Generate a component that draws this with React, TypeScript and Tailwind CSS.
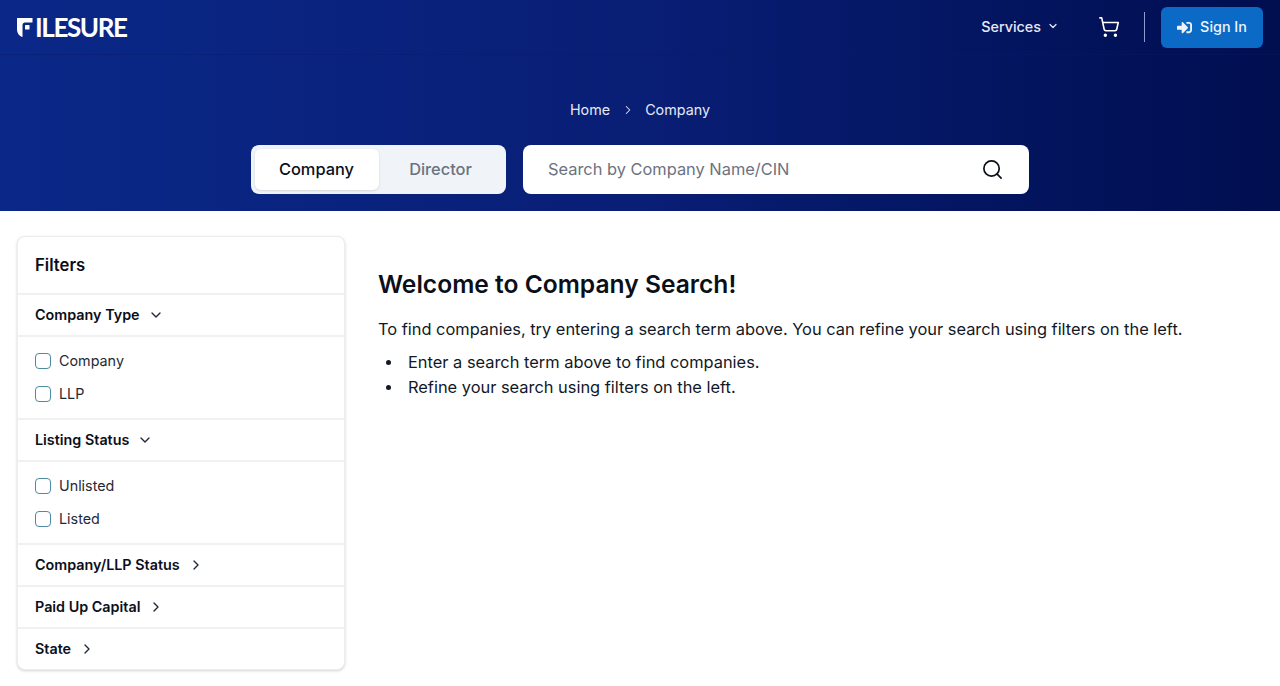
import { ChevronDown, ChevronRight, Search, ShoppingCart } from 'lucide-react'
import { FaSignInAlt } from 'react-icons/fa'

function FilterHeader({ label, open }: { label: string; open?: boolean }) {
  return (
    <div className="flex h-[42px] items-center gap-2 border-t-2 border-[#f0f1f3] pr-4 pl-[17px] text-[14.35px] leading-[22px] font-semibold text-[#0b0f19]">
      <span>{label}</span>
      {open ? (
        <ChevronDown className="h-4 w-4 text-[#1f2937]" strokeWidth={2} />
      ) : (
        <ChevronRight className="h-4 w-4 text-[#1f2937]" strokeWidth={2} />
      )}
    </div>
  )
}

function FilterOption({ label }: { label: string }) {
  return (
    <label className="flex h-[33px] items-center gap-2 text-[14.35px] text-[#1f2937]">
      <span className="h-4 w-4 rounded-[4px] border border-[#4f8aa3] bg-white" />
      <span>{label}</span>
    </label>
  )
}

function FilterGroup({ label, options }: { label: string; options: string[] }) {
  return (
    <>
      <FilterHeader label={label} open />
      <div className="border-t-2 border-[#f0f1f3] pt-[7px] pr-4 pb-2 pl-[17px]">
        {options.map((o) => (
          <FilterOption key={o} label={o} />
        ))}
      </div>
    </>
  )
}

function Bullet({ children }: { children: string }) {
  return (
    <li className="flex items-center">
      <span className="mr-[17px] ml-2 h-[5px] w-[5px] rounded-full bg-[#111827]" />
      {children}
    </li>
  )
}

export default function App() {
  return (
    <div className="h-screen overflow-hidden bg-white font-['Inter',sans-serif] text-[#0b0f19]">
      <div className="h-[211px] bg-gradient-to-r from-[#0a2888] via-[#091e75] to-[#010e50]">
        <header className="flex h-[55px] items-center justify-between border-b border-[#0a1a6a]/40 px-[17px]">
          <div className="flex items-center text-white">
            <svg width="16" height="19" viewBox="0 0 16 19" fill="white" className="mt-[1px]">
              <path d="M0 0H15.5V4.5H8C6.5 4.5 5.5 5.5 5.5 7V19C2 18 0 15 0 11Z" />
              <rect x="8" y="7" width="4.5" height="4.5" rx="0.5" />
            </svg>
            <span className="ml-[2px] font-['Lato',sans-serif] text-[26px] leading-[38px] font-bold tracking-[-1.4px]">ILESURE</span>
          </div>
          <div className="flex items-center">
            <div className="-mt-px flex items-center gap-[6px] text-[14.35px] font-medium text-[#e5e9f5]">
              Services
              <ChevronDown className="h-3 w-3" strokeWidth={2.5} />
            </div>
            <ShoppingCart className="ml-[39px] h-[22px] w-[22px] text-white" strokeWidth={1.75} />
            <div className="mr-4 ml-[24px] h-[30px] w-px bg-[#8d9ccf]" />
            <button className="flex h-[41px] w-[102px] items-center justify-center gap-2 rounded-md bg-[#0a6ac6] text-[14.35px] font-medium text-[#eef3fb]">
              <FaSignInAlt className="h-[15px] w-[15px]" />
              Sign In
            </button>
          </div>
        </header>
        <nav className="mt-[45px] flex items-center justify-center gap-[10px] text-[14.35px] leading-5 text-[#e5e9f5]">
          <span>Home</span>
          <ChevronRight className="ml-[1px] h-[14px] w-[14px]" strokeWidth={1.75} />
          <span>Company</span>
        </nav>
        <div className="mt-[25px] flex justify-center gap-[17px]">
          <div className="flex h-[49px] w-[255px] rounded-lg bg-[#f0f4f8] p-1">
            <div className="flex h-[41px] w-[124px] items-center justify-center rounded-md bg-white pr-px pb-px text-[16.4px] font-medium text-[#0b0f19] shadow-sm">
              Company
            </div>
            <div className="flex h-[41px] w-[123px] items-center justify-center pb-px text-[16.4px] font-medium text-[#6b7280]">
              Director
            </div>
          </div>
          <div className="flex h-[49px] w-[506px] items-center justify-between rounded-lg bg-white pr-[25px] pl-[25px]">
            <span className="pb-px text-[16.4px] text-[#6b7280]">Search by Company Name/CIN</span>
            <Search className="h-[23px] w-[23px] text-[#0b0f19]" strokeWidth={1.75} />
          </div>
        </div>
      </div>
      <div className="flex items-start pt-[25px] pl-[17px]">
        <aside className="w-[328px] overflow-hidden rounded-lg border border-[#eceef1] bg-white shadow-[0_1px_3px_rgba(0,0,0,0.18)]">
          <h2 className="flex h-[56px] items-center pt-[2px] pl-[17px] text-[16.7px] font-semibold text-[#0b0f19]">Filters</h2>
          <FilterGroup label="Company Type" options={['Company', 'LLP']} />
          <FilterGroup label="Listing Status" options={['Unlisted', 'Listed']} />
          <FilterHeader label="Company/LLP Status" />
          <FilterHeader label="Paid Up Capital" />
          <FilterHeader label="State" />
        </aside>
        <main className="ml-[33px] pt-[30px]">
          <h1 className="text-[24.6px] leading-[36px] font-semibold text-[#0b0f19]">Welcome to Company Search!</h1>
          <p className="mt-[15px] text-[16.4px] leading-[25px] text-[#111827]">
            To find companies, try entering a search term above. You can refine your search using filters on the left.
          </p>
          <ul className="mt-2 text-[16.4px] leading-[25px] text-[#111827]">
            <Bullet>Enter a search term above to find companies.</Bullet>
            <Bullet>Refine your search using filters on the left.</Bullet>
          </ul>
        </main>
      </div>
    </div>
  )
}
